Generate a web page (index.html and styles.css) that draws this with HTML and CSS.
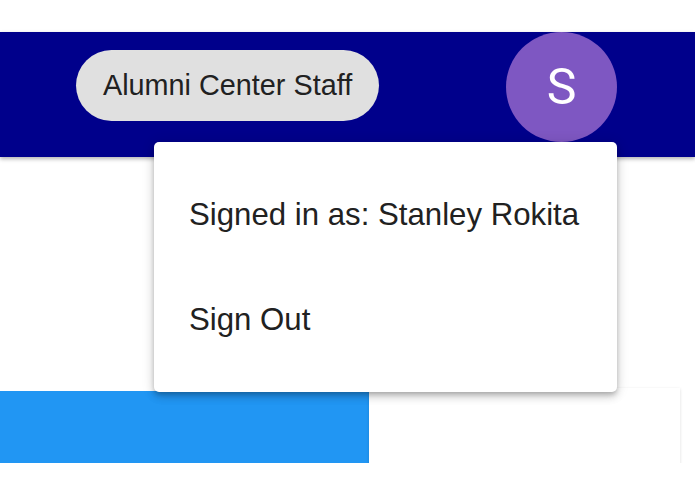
FILE: index.html
```html
<!DOCTYPE html>
<html>
<head>
<meta charset="utf-8">
<link rel="stylesheet" href="styles.css">
</head>
<body>
<div class="page">
  <div class="top-gap"></div>
  <header class="appbar">
    <div class="chip">Alumni Center Staff</div>
    <div class="avatar">S</div>
  </header>
  <main class="content">
    <div class="row">
      <div class="blue-block"></div>
      <div class="card"></div>
    </div>
  </main>
  <div class="menu">
    <div class="menu-item">Signed in as: Stanley Rokita</div>
    <div class="menu-item">Sign Out</div>
  </div>
</div>
</body>
</html>
```
FILE: styles.css
```css
html, body {
  margin: 0;
  padding: 0;
  background: #ffffff;
}
.page {
  position: relative;
  width: 695px;
  height: 494px;
  overflow: hidden;
  font-family: "Liberation Sans", Arial, sans-serif;
}
.top-gap {
  height: 32px;
}
.appbar {
  height: 125px;
  background: #00008b;
  display: flex;
  align-items: flex-start;
  box-shadow: 0 2px 4px rgba(0, 0, 0, 0.3);
  position: relative;
  z-index: 1;
}
.chip {
  margin-left: 76px;
  margin-top: 18px;
  height: 71px;
  box-sizing: border-box;
  padding: 0 27px;
  border-radius: 36px;
  background: #e0e0e0;
  color: #212121;
  font-size: 28.8px;
  display: flex;
  align-items: center;
}
.avatar {
  margin-left: auto;
  margin-right: 78px;
  width: 111px;
  height: 110px;
  border-radius: 50%;
  background: #7e57c2;
  color: #ffffff;
  font-family: Roboto, "Liberation Sans", sans-serif;
  font-size: 50px;
  display: flex;
  align-items: center;
  justify-content: center;
}
.content {
  height: 306px;
}
.row {
  margin-top: 229px;
  padding-top: 2px;
  padding-right: 6px;
  width: 686px;
  height: 75px;
  display: flex;
  overflow: hidden;
}
.blue-block {
  width: 369px;
  height: 90px;
  margin-top: 3px;
  background: #2196f3;
}
.card {
  width: 311px;
  height: 90px;
  background: #ffffff;
  box-shadow: 0 1px 3px rgba(0, 0, 0, 0.14);
}
.menu {
  position: absolute;
  left: 154px;
  top: 142px;
  width: 463px;
  height: 250px;
  box-sizing: border-box;
  padding: 20px 0;
  background: #ffffff;
  border-radius: 5px;
  box-shadow: 0 3px 5px -1px rgba(0, 0, 0, 0.2), 0 5px 8px 0 rgba(0, 0, 0, 0.14), 0 1px 14px 0 rgba(0, 0, 0, 0.12);
  z-index: 2;
}
.menu-item {
  height: 105px;
  line-height: 105px;
  padding-left: 35px;
  font-size: 31.2px;
  color: #212121;
  white-space: nowrap;
}
```
